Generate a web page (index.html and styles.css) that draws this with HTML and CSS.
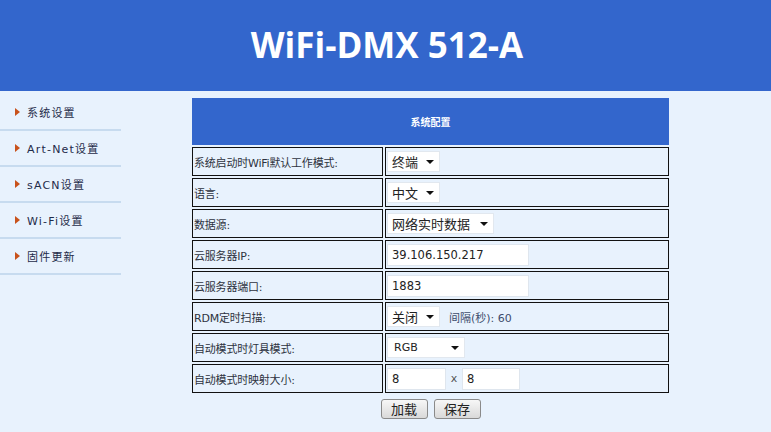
FILE: index.html
```html
<!DOCTYPE html>
<html lang="zh-CN">
<head>
<meta charset="utf-8">
<title>WiFi-DMX 512-A</title>
<link rel="stylesheet" href="styles.css">
</head>
<body>
<header class="top">
  <h1 class="title">WiFi-DMX 512-A</h1>
</header>
<div class="layout">
  <nav class="side">
    <a class="nav-item" href="#">系统设置</a>
    <a class="nav-item" href="#">Art-Net设置</a>
    <a class="nav-item" href="#">sACN设置</a>
    <a class="nav-item" href="#">Wi-Fi设置</a>
    <a class="nav-item" href="#">固件更新</a>
  </nav>
  <main class="content">
    <table class="cfg">
      <colgroup>
        <col class="col-lbl">
        <col class="col-val">
      </colgroup>
      <thead>
        <tr><th colspan="2" class="cfg-head">系统配置</th></tr>
      </thead>
      <tbody>
        <tr>
          <td class="lbl">系统启动时WiFi默认工作模式:</td>
          <td class="val"><span class="sel w53"><select><option>终端</option></select></span></td>
        </tr>
        <tr>
          <td class="lbl">语言:</td>
          <td class="val"><span class="sel w53"><select><option>中文</option></select></span></td>
        </tr>
        <tr>
          <td class="lbl">数据源:</td>
          <td class="val"><span class="sel w107"><select><option>网络实时数据</option></select></span></td>
        </tr>
        <tr>
          <td class="lbl">云服务器IP:</td>
          <td class="val"><input class="txt w142" type="text" value="39.106.150.217"></td>
        </tr>
        <tr>
          <td class="lbl">云服务器端口:</td>
          <td class="val"><input class="txt w142" type="text" value="1883"></td>
        </tr>
        <tr>
          <td class="lbl">RDM定时扫描:</td>
          <td class="val"><span class="sel w53"><select><option>关闭</option></select></span><span class="note">间隔(秒): 60</span></td>
        </tr>
        <tr>
          <td class="lbl">自动模式时灯具模式:</td>
          <td class="val"><span class="sel w78 small"><select><option>RGB</option></select></span></td>
        </tr>
        <tr>
          <td class="lbl">自动模式时映射大小:</td>
          <td class="val"><input class="txt w59" type="text" value="8"><span class="times">x</span><input class="txt w58" type="text" value="8"></td>
        </tr>
      </tbody>
    </table>
    <div class="actions">
      <button class="btn" type="button">加载</button>
      <button class="btn" type="button">保存</button>
    </div>
  </main>
</div>
</body>
</html>
```

FILE: styles.css
```css
html, body {
  margin: 0;
  padding: 0;
}
body {
  background: #e8f2fd;
  font-family: "DejaVu Sans", "Noto Sans CJK SC", sans-serif;
  color: #333;
  width: 771px;
  height: 432px;
  overflow: hidden;
}
.top {
  background: #3366cc;
  height: 91px;
  display: flex;
  align-items: center;
  justify-content: center;
}
.title {
  margin: 0;
  color: #fff;
  font-family: "Open Sans", "Noto Sans", sans-serif;
  font-weight: 700;
  font-size: 35px;
  line-height: 1;
  padding-left: 3px;
  padding-bottom: 2px;
}
.layout {
  display: flex;
  align-items: flex-start;
}
.side {
  width: 121px;
  padding-top: 4px;
  display: flex;
  flex-direction: column;
}
.nav-item {
  position: relative;
  display: flex;
  align-items: center;
  height: 34px;
  padding-left: 27px;
  border-bottom: 2px solid #c7dbef;
  color: #1f2b49;
  text-decoration: none;
  font-size: 11px;
  letter-spacing: 1.2px;
  font-family: "DejaVu Sans", "Noto Sans CJK SC", sans-serif;
}
.nav-item::before {
  content: "";
  position: absolute;
  left: 15px;
  top: 13px;
  width: 0;
  height: 0;
  border-top: 4px solid transparent;
  border-bottom: 4px solid transparent;
  border-left: 5px solid #c8521c;
}
.content {
  padding-left: 69px;
  padding-top: 5px;
}
.cfg {
  border-collapse: separate;
  border-spacing: 2px;
  width: 481px;
  table-layout: fixed;
}
.col-lbl { width: 191px; }
.col-val { width: auto; }
.cfg-head {
  background: #3366cc;
  color: #fff;
  height: 47px;
  padding: 0;
  font-size: 10px;
  font-weight: 700;
  font-family: "Noto Sans CJK SC", sans-serif;
  text-align: center;
  vertical-align: middle;
}
.cfg td {
  border: 1px solid #111;
  height: 27px;
  padding: 0 1px;
  vertical-align: middle;
}
.cfg td.lbl {
  font-size: 11px;
  color: #2e3340;
  font-family: "DejaVu Sans", "Noto Sans CJK SC", sans-serif;
  letter-spacing: -0.2px;
  white-space: nowrap;
  overflow: hidden;
}
.sel {
  position: relative;
  display: inline-block;
  vertical-align: middle;
}
.sel::after {
  content: "";
  position: absolute;
  right: 6px;
  top: 9px;
  border-left: 4px solid transparent;
  border-right: 4px solid transparent;
  border-top: 4px solid #111;
  pointer-events: none;
}
.sel select {
  -webkit-appearance: none;
  appearance: none;
  display: block;
  height: 21px;
  margin: 0;
  padding: 0 0 0 4px;
  border: 1px solid #e2e8ef;
  background: #fff;
  color: #222;
  font-family: "Noto Sans CJK SC", sans-serif;
  font-size: 13px;
  line-height: 19px;
  border-radius: 0;
  width: 100%;
}
.sel.small select {
  font-family: "DejaVu Sans", sans-serif;
  font-size: 11px;
  padding-left: 6px;
}
.w53 { width: 53px; }
.w107 { width: 107px; }
.w78 { width: 78px; }
.txt {
  height: 22px;
  box-sizing: border-box;
  margin: 0;
  padding: 0 4px;
  border: 1px solid #dfe6ee;
  background: #fff;
  color: #222;
  font-family: "DejaVu Sans", sans-serif;
  font-size: 11.5px;
  vertical-align: middle;
  outline: none;
}
.w142 { width: 142px; }
.w59 { width: 59px; }
.w58 { width: 58px; }
.note {
  margin-left: 9px;
  font-size: 11px;
  color: #3d4c6c;
  vertical-align: middle;
  font-family: "DejaVu Sans", "Noto Sans CJK SC", sans-serif;
}
.times {
  display: inline-block;
  width: 16px;
  text-align: center;
  font-size: 11px;
  color: #555;
  vertical-align: middle;
}
.actions {
  width: 481px;
  display: flex;
  justify-content: center;
  gap: 6px;
  margin-top: 4px;
}
.btn {
  width: 47px;
  height: 20px;
  padding: 0;
  border: 1px solid #8a8a8a;
  border-radius: 3px;
  background: linear-gradient(#f7f7f7, #d9d9d9);
  color: #222;
  font-family: "Noto Sans CJK SC", sans-serif;
  font-size: 13px;
  line-height: 18px;
}
```
